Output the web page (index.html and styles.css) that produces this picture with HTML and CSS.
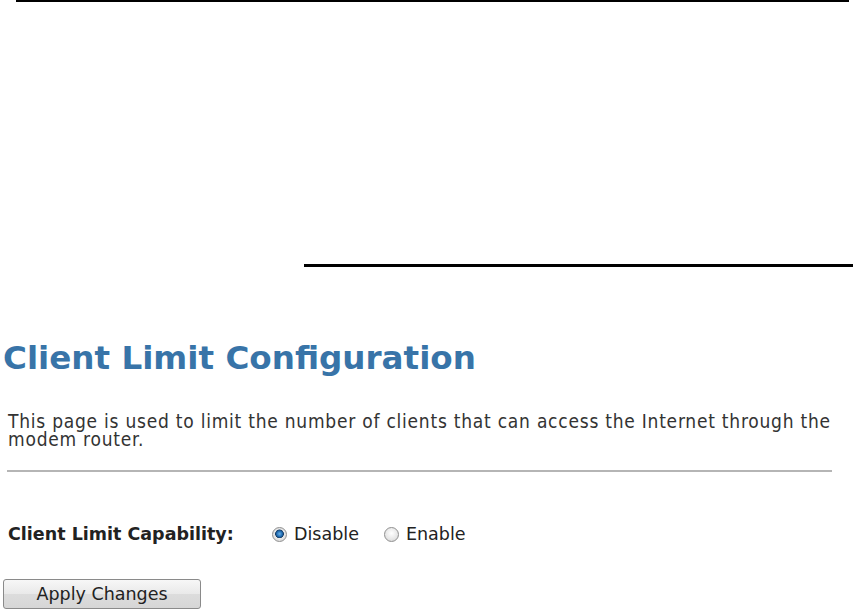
FILE: index.html
```html
<!DOCTYPE html>
<html lang="en">
<head>
<meta charset="utf-8">
<title>Client Limit Configuration</title>
<link rel="stylesheet" href="styles.css">
</head>
<body>
<div class="top-rule"></div>
<div class="head-rule"></div>
<main class="content">
  <h1 class="title">Client Limit Configuration</h1>
  <p class="intro">This page is used to limit the number of clients that can access the Internet through the modem router.</p>
  <div class="divider"></div>
  <form class="form">
    <div class="row">
      <span class="label">Client Limit Capability:</span>
      <label class="opt"><input type="radio" name="cap" class="radio" checked> Disable</label>
      <label class="opt"><input type="radio" name="cap" class="radio"> Enable</label>
    </div>
    <button type="button" class="btn">Apply Changes</button>
  </form>
</main>
</body>
</html>
```
FILE: styles.css
```css
html, body {
  margin: 0;
  padding: 0;
  background: #ffffff;
}
body {
  width: 853px;
  height: 614px;
  overflow: hidden;
  font-family: "DejaVu Sans", Verdana, sans-serif;
}
.top-rule {
  height: 2px;
  background: #000;
  margin: 0 4px 0 16px;
}
.head-rule {
  height: 3px;
  background: #000;
  margin: 262px 0 0 304px;
}
.content {
  padding: 0 0 0 3px;
}
.title {
  margin: 71px 0 0 0;
  font-family: "DejaVu Sans", Verdana, sans-serif;
  font-weight: bold;
  font-size: 32.6px;
  line-height: 40px;
  color: #3874a8;
}
.intro {
  margin: 34px 0 0 5px;
  width: 830px;
  font-family: "DejaVu Sans Condensed", "DejaVu Sans", sans-serif;
  font-stretch: condensed;
  font-size: 19px;
  letter-spacing: 0.76px;
  line-height: 18px;
  color: #333;
}
.divider {
  margin: 22px 0 0 4px;
  width: 825px;
  height: 2px;
  background: #b5b5b5;
}
.form {
  margin: 0;
}
.row {
  display: flex;
  align-items: center;
  margin: 52px 0 0 5px;
  height: 20px;
}
.label {
  width: 264px;
  font-weight: bold;
  font-size: 17.5px;
  color: #222;
}
.opt {
  display: flex;
  align-items: center;
  gap: 7px;
  font-size: 17.5px;
  color: #222;
  margin-right: 25px;
}
.radio {
  appearance: none;
  -webkit-appearance: none;
  margin: 0;
  width: 15px;
  height: 15px;
  border-radius: 50%;
  border: 1px solid #8f8f8f;
  background: radial-gradient(circle at 50% 40%, #ffffff 0%, #e6e6e6 60%, #cfcfcf 100%);
  box-sizing: border-box;
}
.radio:checked {
  background: radial-gradient(circle at 50% 45%, #6fb2e6 0%, #1f6db5 28%, #1a3f66 42%, #e8e8e8 48%, #d0d0d0 100%);
}
.btn {
  display: block;
  margin: 35px 0 0 0;
  width: 198px;
  height: 30px;
  padding: 0;
  border: 1px solid #8a8a8a;
  border-radius: 3px;
  background: linear-gradient(#f7f7f7, #e9e9e9 50%, #dcdcdc 51%, #d6d6d6);
  font-family: "DejaVu Sans", Verdana, sans-serif;
  font-size: 17.5px;
  color: #222;
}
```
